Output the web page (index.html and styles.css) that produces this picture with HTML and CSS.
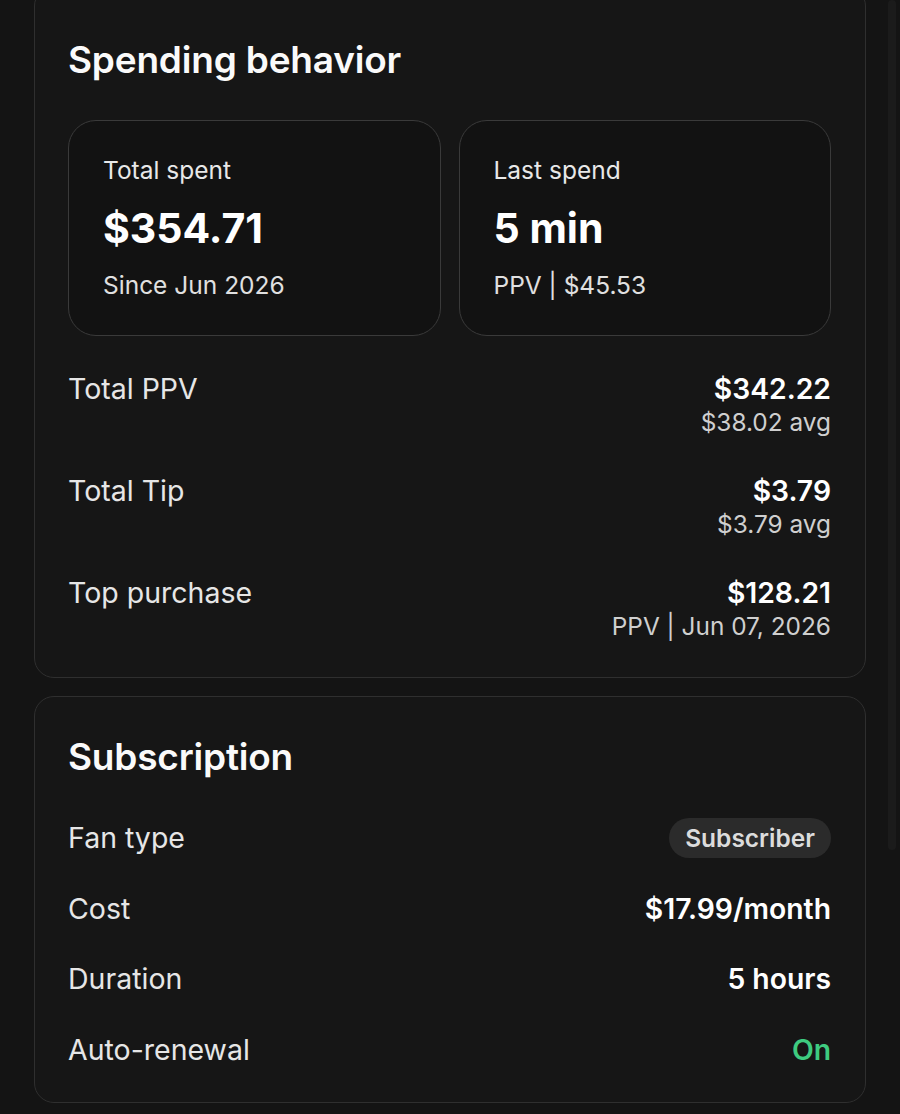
FILE: index.html
```html
<!DOCTYPE html>
<html>
   <head>
      <meta name="viewport" content="width=device-width, initial-scale=1">
      <link rel="stylesheet" href="styles.css">
   </head>
   <body>
      <div class="scrollbar"></div>

      <!--
      Spending behavior
      -->
      <section class="card spending">
         <h2 class="card-title">Spending behavior</h2>

         <div class="stats">
            <div class="stat">
               <div class="stat-label">Total spent</div>
               <div class="stat-value">$354.71</div>
               <div class="stat-note">Since Jun 2026</div>
            </div>
            <div class="stat">
               <div class="stat-label">Last spend</div>
               <div class="stat-value">5 min</div>
               <div class="stat-note">PPV | $45.53</div>
            </div>
         </div>

         <div class="spend-rows">
            <div class="spend-row">
               <div class="row-label">Total PPV</div>
               <div class="row-right">
                  <div class="row-value">$342.22</div>
                  <div class="row-sub">$38.02 avg</div>
               </div>
            </div>
            <div class="spend-row">
               <div class="row-label">Total Tip</div>
               <div class="row-right">
                  <div class="row-value">$3.79</div>
                  <div class="row-sub">$3.79 avg</div>
               </div>
            </div>
            <div class="spend-row">
               <div class="row-label">Top purchase</div>
               <div class="row-right">
                  <div class="row-value">$128.21</div>
                  <div class="row-sub">PPV | Jun 07, 2026</div>
               </div>
            </div>
         </div>
      </section>

      <!--
      Subscription
      -->
      <section class="card subscription">
         <h2 class="card-title">Subscription</h2>

         <div class="sub-rows">
            <div class="sub-row">
               <div class="row-label">Fan type</div>
               <span class="badge">Subscriber</span>
            </div>
            <div class="sub-row">
               <div class="row-label">Cost</div>
               <div class="row-value">$17.99/month</div>
            </div>
            <div class="sub-row">
               <div class="row-label">Duration</div>
               <div class="row-value">5 hours</div>
            </div>
            <div class="sub-row">
               <div class="row-label">Auto-renewal</div>
               <div class="row-value on">On</div>
            </div>
         </div>
      </section>
   </body>
</html>
```

FILE: styles.css
```css
body {
   margin : 0;
   padding : 0 34px;
   background-color : #141414;
   font-family : Inter, "Noto Sans", Arial, sans-serif;
   color : #e6e6e6;
}

.scrollbar {
   position : fixed;
   top : 0;
   right : 4px;
   width : 8px;
   height : 850px;
   background-color : #1b1b1b;
   border-radius : 4px;
}

.card {
   background-color : #161616;
   border : 1.5px solid #2f2f2f;
   border-radius : 20px;
}

.spending {
   margin-top : -14px;
   padding : 52px 34px 36px 33px;
}

.subscription {
   margin-top : 18px;
   padding : 39px 34px 32px 33px;
}

.card-title {
   margin : 0;
   font-size : 37px;
   line-height : 42px;
   font-weight : 600;
   color : #fafafa;
   letter-spacing : -0.2px;
}

/* two boxes under the title */
.stats {
   display : grid;
   grid-template-columns : 1fr 1fr;
   gap : 18px;
   margin-top : 39px;
}

.stat {
   background-color : #121212;
   border : 1.5px solid #3a3a3a;
   border-radius : 28px;
   padding : 34px 34px 35px;
}

.stat-label {
   font-size : 24.5px;
   line-height : 30px;
   color : #e8e8e8;
}

.stat-value {
   margin-top : 19px;
   font-size : 41px;
   line-height : 48px;
   font-weight : 700;
   color : #ffffff;
}

.stat-note {
   margin-top : 18px;
   font-size : 24.5px;
   line-height : 30px;
   color : #e0e0e0;
}

.spend-rows {
   display : flex;
   flex-direction : column;
   gap : 36px;
   margin-top : 35px;
}

.spend-row {
   display : flex;
   justify-content : space-between;
   align-items : flex-start;
}

.row-label {
   font-size : 28.5px;
   line-height : 36px;
   color : #e6e6e6;
}

.row-right {
   text-align : right;
}

.row-value {
   font-size : 28.3px;
   line-height : 36px;
   font-weight : 600;
   color : #ffffff;
}

.row-sub {
   font-size : 24.4px;
   line-height : 30px;
   color : #cfcfcf;
}

.sub-rows {
   display : flex;
   flex-direction : column;
   gap : 30.5px;
   margin-top : 40px;
}

.sub-row {
   display : flex;
   justify-content : space-between;
   align-items : center;
   height : 40px;
}

.badge {
   display : inline-block;
   height : 40px;
   line-height : 40px;
   padding : 0 16px;
   border-radius : 20px;
   background-color : #2b2b2b;
   font-size : 24.5px;
   font-weight : 600;
   color : #dcdcdc;
}

.on {
   color : #3ecb80;
}
```
